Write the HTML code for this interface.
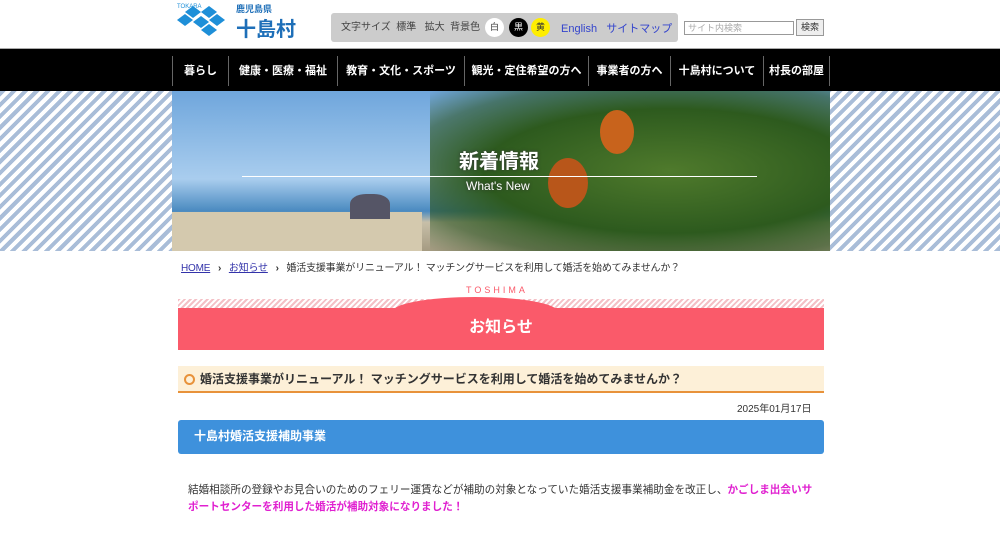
<!DOCTYPE html>
<html><head><meta charset="utf-8"><style>
*{margin:0;padding:0;box-sizing:border-box}
body{width:1000px;height:540px;overflow:hidden;background:#fff;font-family:"Liberation Sans","Noto Sans CJK JP",sans-serif;color:#333;position:relative}
.abs{position:absolute}
.nav{left:0;top:48px;width:1000px;height:43px;background:#000;border-top:1px solid #aaa}
.nav div{position:absolute;top:7px;height:30px;color:#fff;font-weight:bold;font-size:11px;line-height:30px;text-align:center;border-left:1px solid #666}
.hero{left:0;top:91px;width:1000px;height:160px;background:repeating-linear-gradient(135deg,#a9bdd8 0 4px,#fff 4px 8px)}
.photo{left:172px;top:91px;width:658px;height:160px;background:linear-gradient(180deg,#6fa6dc 0%,#a9cdee 55%,#4a8ac0 75%,#c7bfa8 82%,#a59b82 100%)}
</style></head><body>
<svg class="abs" style="left:177px;top:2px" width="56" height="36" viewBox="0 0 56 36"><g fill="#1e8fd8"><path d="M8 10l8-6 8 6-8 6z"/><path d="M24 10l8-6 8 6-8 6z"/><path d="M16 20l8-6 8 6-8 6z"/><path d="M0 18l8-6 8 6-8 6z"/><path d="M32 18l8-6 8 6-8 6z"/><path d="M24 28l8-6 8 6-8 6z"/></g><text x="0" y="6" font-size="6" fill="#1e8fd8">TOKARA</text></svg>
<div class="abs" style="left:236px;top:2px;font-size:9px;color:#1e6fb8;font-weight:bold">鹿児島県</div>
<div class="abs" style="left:236px;top:13px;font-size:20px;color:#1e6fb8;font-weight:bold">十島村</div>
<div class="abs" style="left:331px;top:13px;width:347px;height:29px;background:#ccc;border-radius:3px;font-size:10px;line-height:29px;padding-left:10px;color:#444">文字サイズ&nbsp; 標準&nbsp;&nbsp; 拡大&nbsp; 背景色</div>
<div class="abs" style="left:485px;top:18px;width:19px;height:19px;border-radius:50%;background:#fff;font-size:9px;text-align:center;line-height:19px">白</div>
<div class="abs" style="left:509px;top:18px;width:19px;height:19px;border-radius:50%;background:#000;color:#fff;font-size:9px;text-align:center;line-height:19px">黒</div>
<div class="abs" style="left:531px;top:18px;width:19px;height:19px;border-radius:50%;background:#fe0;font-size:9px;text-align:center;line-height:19px">黄</div>
<div class="abs" style="left:561px;top:20px;font-size:11px;color:#3344cc">English&nbsp;&nbsp; サイトマップ</div>
<div class="abs" style="left:684px;top:21px;width:110px;height:14px;border:1px solid #999;font-size:9px;color:#aaa;padding-left:3px;line-height:12px">サイト内検索</div>
<div class="abs" style="left:796px;top:19px;width:28px;height:17px;border:1px solid #999;background:#eee;font-size:9px;text-align:center;line-height:15px">検索</div>
<div class="abs nav">
<div style="left:172px;width:56px">暮らし</div><div style="left:228px;width:109px">健康・医療・福祉</div><div style="left:337px;width:127px">教育・文化・スポーツ</div><div style="left:464px;width:124px">観光・定住希望の方へ</div><div style="left:588px;width:82px">事業者の方へ</div><div style="left:670px;width:93px">十島村について</div><div style="left:763px;width:67px;border-right:1px solid #666">村長の部屋</div></div>
<div class="abs hero"></div>
<div class="abs photo"></div>
<div class="abs" style="left:172px;top:212px;width:250px;height:39px;background:#d4c9ae"></div>
<div class="abs" style="left:430px;top:91px;width:400px;height:160px;background:radial-gradient(ellipse at 60% 50%,#4f7a2c,#2d5a1e 55%,rgba(40,80,30,.6) 80%,transparent)"></div>
<div class="abs" style="left:600px;top:110px;width:34px;height:44px;border-radius:50%;background:#c8631c"></div>
<div class="abs" style="left:548px;top:158px;width:40px;height:50px;border-radius:50%;background:#b8561a"></div>
<div class="abs" style="left:350px;top:194px;width:40px;height:25px;border-radius:40% 40% 0 0;background:#556"></div>
<div class="abs" style="left:459px;top:145px;font-size:20px;color:#fff;font-weight:bold;text-shadow:0 0 3px #333">新着情報</div>
<div class="abs" style="left:242px;top:176px;width:515px;height:1px;background:#fff"></div>
<div class="abs" style="left:466px;top:179px;font-size:12px;color:#fff;text-shadow:0 0 3px #333">What's New</div>
<div class="abs" style="left:181px;top:259px;font-size:10px;color:#333;white-space:nowrap;letter-spacing:-0.2px"><u style="color:#3333aa">HOME</u>&nbsp;&nbsp; <b>›</b> &nbsp;&nbsp;<u style="color:#3333aa">お知らせ</u>&nbsp;&nbsp; <b>›</b> &nbsp;&nbsp;婚活支援事業がリニューアル！ マッチングサービスを利用して婚活を始めてみませんか？</div>
<div class="abs" style="left:178px;top:299px;width:646px;height:9px;background:repeating-linear-gradient(135deg,#f4c0c6 0 2px,#fff 2px 4px)"></div>
<div class="abs" style="left:392px;top:297px;width:166px;height:30px;border-radius:50%;background:#fa5a6a"></div>
<div class="abs" style="left:466px;top:285px;font-size:9px;letter-spacing:3px;color:#fa5a6a">TOSHIMA</div>
<div class="abs" style="left:178px;top:308px;width:646px;height:42px;background:#fa5a6a;color:#fff;font-size:16px;font-weight:bold;text-align:center;line-height:40px">お知らせ</div>
<div class="abs" style="left:178px;top:366px;width:646px;height:27px;background:#fdf0d8;border-bottom:2px solid #e8923a;font-size:12px;font-weight:bold;line-height:26px;padding-left:22px">婚活支援事業がリニューアル！ マッチングサービスを利用して婚活を始めてみませんか？</div>
<div class="abs" style="left:184px;top:374px;width:11px;height:11px;border:2px solid #e8923a;border-radius:50%"></div>
<div class="abs" style="left:737px;top:400px;font-size:10px">2025年01月17日</div>
<div class="abs" style="left:178px;top:420px;width:646px;height:34px;background:#3e91dc;border-radius:3px;color:#fff;font-size:12px;font-weight:bold;line-height:33px;padding-left:16px">十島村婚活支援補助事業</div>
<div class="abs" style="left:188px;top:482px;width:630px;font-size:10.6px;line-height:17px">結婚相談所の登録やお見合いのためのフェリー運賃などが補助の対象となっていた婚活支援事業補助金を改正し、<b style="color:#e020d0">かごしま出会いサポートセンターを利用した婚活が補助対象になりました！</b></div>
</body></html>
